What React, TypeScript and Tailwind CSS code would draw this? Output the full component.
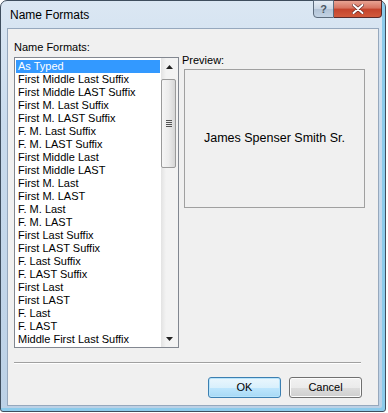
import React from "react";

const items = [
  "As Typed",
  "First Middle Last Suffix",
  "First Middle LAST Suffix",
  "First M. Last Suffix",
  "First M. LAST Suffix",
  "F. M. Last Suffix",
  "F. M. LAST Suffix",
  "First Middle Last",
  "First Middle LAST",
  "First M. Last",
  "First M. LAST",
  "F. M. Last",
  "F. M. LAST",
  "First Last Suffix",
  "First LAST Suffix",
  "F. Last Suffix",
  "F. LAST Suffix",
  "First Last",
  "First LAST",
  "F. Last",
  "F. LAST",
  "Middle First Last Suffix",
];

const font = { fontFamily: '"Liberation Sans", Arial, sans-serif' };

function Scrollbar() {
  return (
    <div className="w-[17px] h-full flex flex-col bg-[linear-gradient(90deg,#e3e3e3_0%,#f3f3f3_30%,#f3f3f3_100%)]">
      <div className="h-[17px] flex items-center justify-center">
        <svg width="7" height="4" viewBox="0 0 7 4">
          <path d="M3.5 0 L7 4 L0 4 Z" fill="#222" />
        </svg>
      </div>
      <div className="mt-[4px] h-[89px] w-[15px] rounded-[2px] border border-[#9a9a9a] bg-[linear-gradient(90deg,#f5f5f5_0%,#ececec_50%,#d6d6d6_100%)] flex items-center justify-center">
        <div className="flex flex-col gap-[1px]">
          <div className="w-[6px] h-[1px] bg-[#555]" />
          <div className="w-[6px] h-[1px] bg-[#555]" />
          <div className="w-[6px] h-[1px] bg-[#555]" />
          <div className="w-[6px] h-[1px] bg-[#555]" />
        </div>
      </div>
      <div className="flex-1" />
      <div className="h-[17px] flex items-center justify-center">
        <svg width="7" height="4" viewBox="0 0 7 4">
          <path d="M0 0 L7 0 L3.5 4 Z" fill="#222" />
        </svg>
      </div>
    </div>
  );
}

function Button({ label, def }: { label: string; def?: boolean }) {
  return (
    <div
      className={
        "w-[73px] h-[21px] rounded-[3px] border flex items-center justify-center text-[11px] text-black " +
        (def
          ? "border-[#3c7fb1] bg-[linear-gradient(180deg,#eaf6fd_0%,#d9f0fc_50%,#bee6fd_51%,#a7d9f5_100%)] shadow-[inset_0_0_0_1px_#b8e4fb]"
          : "border-[#707070] bg-[linear-gradient(180deg,#f2f2f2_0%,#ebebeb_50%,#dddddd_51%,#cfcfcf_100%)] shadow-[inset_0_0_0_1px_#fcfcfc]")
      }
    >
      {label}
    </div>
  );
}

export default function App() {
  return (
    <div className="w-[388px] h-[413px] bg-white" style={font}>
      <div className="w-[386px] h-[412px] rounded-t-[7px] rounded-b-[3px] border border-[#3f4e5e] bg-[linear-gradient(180deg,#dbe7f3_0%,#c9dbed_30%,#bcd1e6_100%)] shadow-[inset_-3px_-3px_0_#8ccbeb] flex flex-col">
        <div className="h-[27px] flex items-start pl-[9px] pr-[3px]">
          <div className="mt-[7px] text-[12px] leading-[14px] text-black">Name Formats</div>
          <div className="flex-1" />
          <div className="flex -mt-[1px]">
            <div className="w-[21px] h-[18px] rounded-bl-[4px] border border-[#5d6c7d] bg-[linear-gradient(180deg,#e7eef6_0%,#c9d6e4_50%,#b2c3d6_51%,#c3d3e4_100%)] flex items-center justify-center text-[11px] font-bold text-[#4b5663] leading-none">
              ?
            </div>
            <div className="w-[48px] h-[18px] rounded-br-[4px] border border-l-0 border-[#5a2a2a] bg-[linear-gradient(180deg,#e8a393_0%,#d7725f_45%,#c4432c_50%,#d25a3c_100%)] flex items-center justify-center">
              <svg width="12" height="10" viewBox="0 0 12 10">
                <path d="M1.5 1 L10.5 9 M10.5 1 L1.5 9" stroke="#5a2020" strokeWidth="3.2" strokeLinecap="round" />
                <path d="M1.5 1 L10.5 9 M10.5 1 L1.5 9" stroke="#ffffff" strokeWidth="2" strokeLinecap="round" />
              </svg>
            </div>
          </div>
        </div>
        <div className="mx-[6px] h-[378px] border border-[#96a8bd] bg-[#f0f0f0] flex flex-col px-[6px]">
          <div className="flex items-start">
            <div className="w-[165px] flex flex-col">
              <div className="mt-[11px] h-[14px] leading-[14px] text-[11px] text-black">Name Formats:</div>
              <div className="mt-[3px] h-[291px] border border-[#828790] bg-white flex overflow-hidden">
                <div className="flex-1 pt-[2px] px-[1px] overflow-hidden">
                  {items.map((it, i) => (
                    <div
                      key={i}
                      className={
                        "h-[13px] leading-[13px] pl-[2px] text-[11px] whitespace-nowrap " +
                        (i === 0 ? "bg-[#3399ff] text-white" : "text-black")
                      }
                    >
                      {it}
                    </div>
                  ))}
                </div>
                <Scrollbar />
              </div>
            </div>
            <div className="ml-[3px] flex flex-col">
              <div className="mt-[24px] h-[14px] leading-[14px] text-[11px] text-black">Preview:</div>
              <div className="mt-[2px] ml-[2px] w-[181px] h-[139px] border border-[#a0a0a0] flex items-center justify-center">
                <span className="text-[12.5px] text-black">James Spenser Smith Sr.</span>
              </div>
            </div>
          </div>
          <div className="mt-[14px] w-[347px] h-[2px] border-t border-[#a0a0a0] border-b border-b-white" />
          <div className="mt-[13px] flex justify-end gap-[8px] pr-[10px]">
            <Button label="OK" def />
            <Button label="Cancel" />
          </div>
        </div>
      </div>
    </div>
  );
}
